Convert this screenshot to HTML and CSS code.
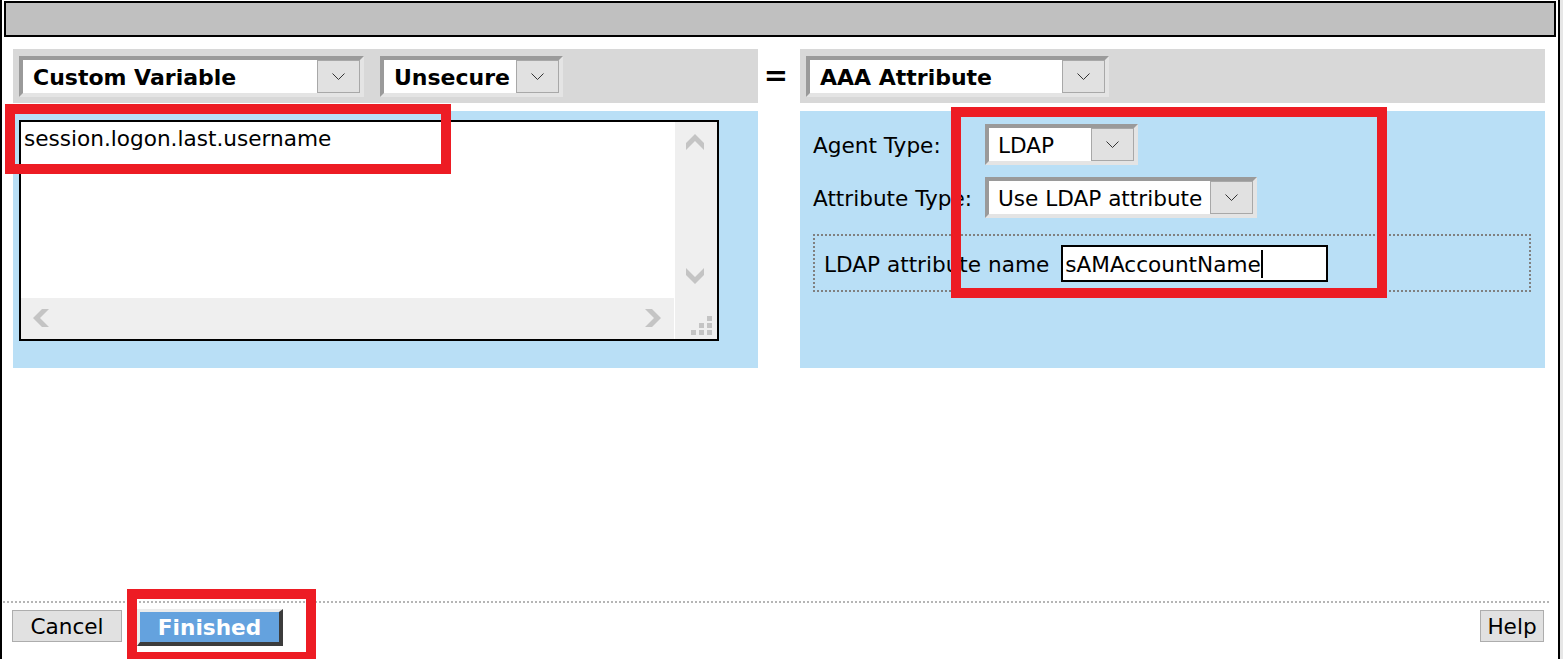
FILE: index.html
```html
<!DOCTYPE html>
<html lang="en">
<head>
<meta charset="utf-8">
<title>Variable Assignment</title>
<link rel="stylesheet" href="styles.css">
</head>
<body>
<div class="frame">
  <div class="titlebar"></div>
  <div class="editor">
    <div class="side">
      <div class="toolbar">
        <div class="select select-bold w-custom">
          <span class="select-label">Custom Variable</span>
          <span class="select-btn"><svg width="13" height="8" viewBox="0 0 13 8"><polyline points="0.5,0.5 6.5,6.5 12.5,0.5" fill="none" stroke="#333" stroke-width="1"/></svg></span>
        </div>
        <div class="select select-bold w-unsecure">
          <span class="select-label">Unsecure</span>
          <span class="select-btn"><svg width="13" height="8" viewBox="0 0 13 8"><polyline points="0.5,0.5 6.5,6.5 12.5,0.5" fill="none" stroke="#333" stroke-width="1"/></svg></span>
        </div>
      </div>
      <div class="panel panel-left">
        <div class="textarea">
          <div class="ta-content">session.logon.last.username</div>
          <div class="vscroll">
            <svg width="18" height="16" viewBox="0 0 18 16"><polygon points="0,9 9,0 18,9 18,16 9,7 0,16" fill="#c4c4c4"/></svg>
            <svg width="18" height="16" viewBox="0 0 18 16"><polygon points="0,0 9,9 18,0 18,7 9,16 0,7" fill="#c4c4c4"/></svg>
          </div>
          <div class="hscroll">
            <svg width="16" height="18" viewBox="0 0 16 18"><polygon points="16,0 9,0 0,9 9,18 16,18 7,9" fill="#c4c4c4"/></svg>
            <svg width="16" height="18" viewBox="0 0 16 18"><polygon points="0,0 7,0 16,9 7,18 0,18 9,9" fill="#c4c4c4"/></svg>
          </div>
          <div class="corner">
            <svg class="grip" width="21" height="19" viewBox="0 0 21 19"><g fill="#c4c4c4"><rect x="16" y="0" width="5" height="5"/><rect x="8" y="7" width="5" height="5"/><rect x="16" y="7" width="5" height="5"/><rect x="0" y="14" width="5" height="5"/><rect x="8" y="14" width="5" height="5"/><rect x="16" y="14" width="5" height="5"/></g></svg>
          </div>
        </div>
      </div>
    </div>
    <div class="equals">=</div>
    <div class="side">
      <div class="toolbar">
        <div class="select select-bold w-aaa">
          <span class="select-label">AAA Attribute</span>
          <span class="select-btn"><svg width="13" height="8" viewBox="0 0 13 8"><polyline points="0.5,0.5 6.5,6.5 12.5,0.5" fill="none" stroke="#333" stroke-width="1"/></svg></span>
        </div>
      </div>
      <div class="panel panel-right">
        <div class="form-grid">
          <span class="form-label">Agent Type:</span>
          <div class="select w-ldap">
            <span class="select-label">LDAP</span>
            <span class="select-btn"><svg width="13" height="8" viewBox="0 0 13 8"><polyline points="0.5,0.5 6.5,6.5 12.5,0.5" fill="none" stroke="#333" stroke-width="1"/></svg></span>
          </div>
          <span class="form-label">Attribute Type:</span>
          <div class="select w-use">
            <span class="select-label">Use LDAP attribute</span>
            <span class="select-btn"><svg width="13" height="8" viewBox="0 0 13 8"><polyline points="0.5,0.5 6.5,6.5 12.5,0.5" fill="none" stroke="#333" stroke-width="1"/></svg></span>
          </div>
        </div>
        <div class="attr-box">
          <span class="form-label">LDAP attribute name</span>
          <div class="text-input">sAMAccountName<span class="caret"></span></div>
        </div>
      </div>
    </div>
  </div>
  <div class="footer">
    <button class="btn">Cancel</button>
    <button class="btn btn-primary">Finished</button>
    <span class="spacer"></span>
    <button class="btn">Help</button>
  </div>
</div>
<div class="mark mark-1"></div>
<div class="mark mark-2"></div>
<div class="mark mark-3"></div>
</body>
</html>
```
FILE: styles.css
```css
html, body {
  margin: 0;
  padding: 0;
  height: 659px;
  overflow: hidden;
}
body {
  position: relative;
  background: #e6e6e6;
  font-family: "DejaVu Sans", Verdana, sans-serif;
  font-size: 21.6px;
  color: #000;
}
.frame {
  width: 1560px;
  height: 659px;
  box-sizing: border-box;
  border-left: 2px solid #000;
  border-right: 2px solid #000;
  background: #fff;
  display: flex;
  flex-direction: column;
}
.titlebar {
  margin: 1px 2px 0 2px;
  height: 36px;
  box-sizing: border-box;
  border: 2px solid #000;
  background: #c0c0c0;
  flex: none;
}
.editor {
  margin-top: 12px;
  padding-left: 11px;
  display: flex;
  flex: none;
}
.side {
  width: 745px;
  flex: none;
}
.equals {
  width: 42px;
  height: 54px;
  flex: none;
  display: flex;
  align-items: center;
  justify-content: center;
  font-weight: bold;
  font-size: 29px;
  padding: 0 6px 2px 0;
  box-sizing: border-box;
}
.toolbar {
  height: 54px;
  box-sizing: border-box;
  background: #d8d8d8;
  padding: 7px 0 0 6px;
  display: flex;
  gap: 16px;
  align-items: flex-start;
}
.select {
  height: 41px;
  box-sizing: border-box;
  border: 4px solid;
  border-color: #9a9a9a #e4e4e4 #e4e4e4 #9a9a9a;
  background: #fff;
  display: flex;
  align-items: stretch;
  flex: none;
}
.select-bold {
  font-weight: bold;
  font-size: 22px;
}
.select-label {
  flex: 1;
  display: flex;
  align-items: center;
  padding: 1px 0 0 10px;
  white-space: nowrap;
  overflow: hidden;
}
.select-btn {
  width: 43px;
  flex: none;
  box-sizing: border-box;
  border: 1px solid #a8a8a8;
  background: #e1e1e1;
  display: flex;
  align-items: center;
  justify-content: center;
}
.w-custom { width: 345px; }
.w-unsecure { width: 183px; }
.w-aaa { width: 303px; }
.w-ldap { width: 153px; }
.w-use { width: 272px; }
.w-ldap .select-label, .w-use .select-label { padding-left: 9px; }

.panel {
  margin-top: 8px;
  height: 257px;
  box-sizing: border-box;
  background: #b9dff6;
}
.panel-left {
  padding: 9px 0 0 6px;
}
.textarea {
  width: 700px;
  height: 221px;
  box-sizing: border-box;
  border: 2px solid #000;
  background: #fff;
  display: grid;
  grid-template-columns: 1fr 42px;
  grid-template-rows: 1fr 41px;
}
.ta-content {
  padding: 4px 0 0 3px;
  line-height: 25px;
}
.vscroll {
  background: #efefef;
  display: flex;
  flex-direction: column;
  justify-content: space-between;
  align-items: flex-start;
  padding: 12px 0 14px 11px;
}
.hscroll {
  background: #efefef;
  border-right: 1px solid #fff;
  display: flex;
  justify-content: space-between;
  align-items: flex-start;
  padding: 11px 13px 0 12px;
}
.corner {
  background: #efefef;
}
.grip {
  display: block;
  margin: 18px 0 0 16px;
}
.panel-right {
  padding: 13px 0 0 13px;
}
.form-grid {
  display: grid;
  grid-template-columns: 172px auto;
  justify-content: start;
  row-gap: 12px;
  align-items: center;
}
.form-label {
  white-space: nowrap;
  padding-top: 2px;
}
.attr-box {
  margin-top: 16px;
  width: 718px;
  height: 58px;
  box-sizing: border-box;
  border: 2px dotted #808080;
  display: flex;
  align-items: center;
  padding-left: 9px;
  gap: 12px;
}
.text-input {
  width: 267px;
  height: 37px;
  box-sizing: border-box;
  border: 2px solid #000;
  background: #fff;
  display: flex;
  align-items: center;
  padding: 2px 0 0 2px;
  white-space: nowrap;
}
.caret {
  display: inline-block;
  width: 2px;
  height: 28px;
  background: #000;
}
.footer {
  margin: auto 9px 0 1px;
  height: 58px;
  box-sizing: border-box;
  border-top: 2px dotted #b5b5b5;
  padding: 7px 5px 0 9px;
  display: flex;
  align-items: flex-start;
  flex: none;
}
.spacer { flex: 1; }
.btn {
  font-family: "DejaVu Sans", Verdana, sans-serif;
  font-size: 21.6px;
  color: #000;
  height: 32px;
  box-sizing: border-box;
  border: 1px solid #adadad;
  background: #e1e1e1;
  padding: 2px 0 0 0;
  margin: 0;
  line-height: 28px;
}
.btn:first-child { width: 110px; }
.btn:last-child { width: 64px; }
.btn-primary {
  width: 146px;
  height: 37px;
  margin: -1px 0 0 15px;
  border-style: solid;
  border-width: 3px 4px 4px 3px;
  border-color: #ececec #3c3c3c #3c3c3c #ececec;
  background: #64a2de;
  color: #fff;
  font-weight: bold;
  padding-top: 2px;
  line-height: 28px;
}
.mark {
  position: absolute;
  box-sizing: border-box;
  border: 10px solid #ed1c24;
}
.mark-1 { left: 5px; top: 104px; width: 446px; height: 70px; }
.mark-2 { left: 951px; top: 107px; width: 436px; height: 191px; }
.mark-3 { left: 127px; top: 589px; width: 189px; height: 73px; }
```
